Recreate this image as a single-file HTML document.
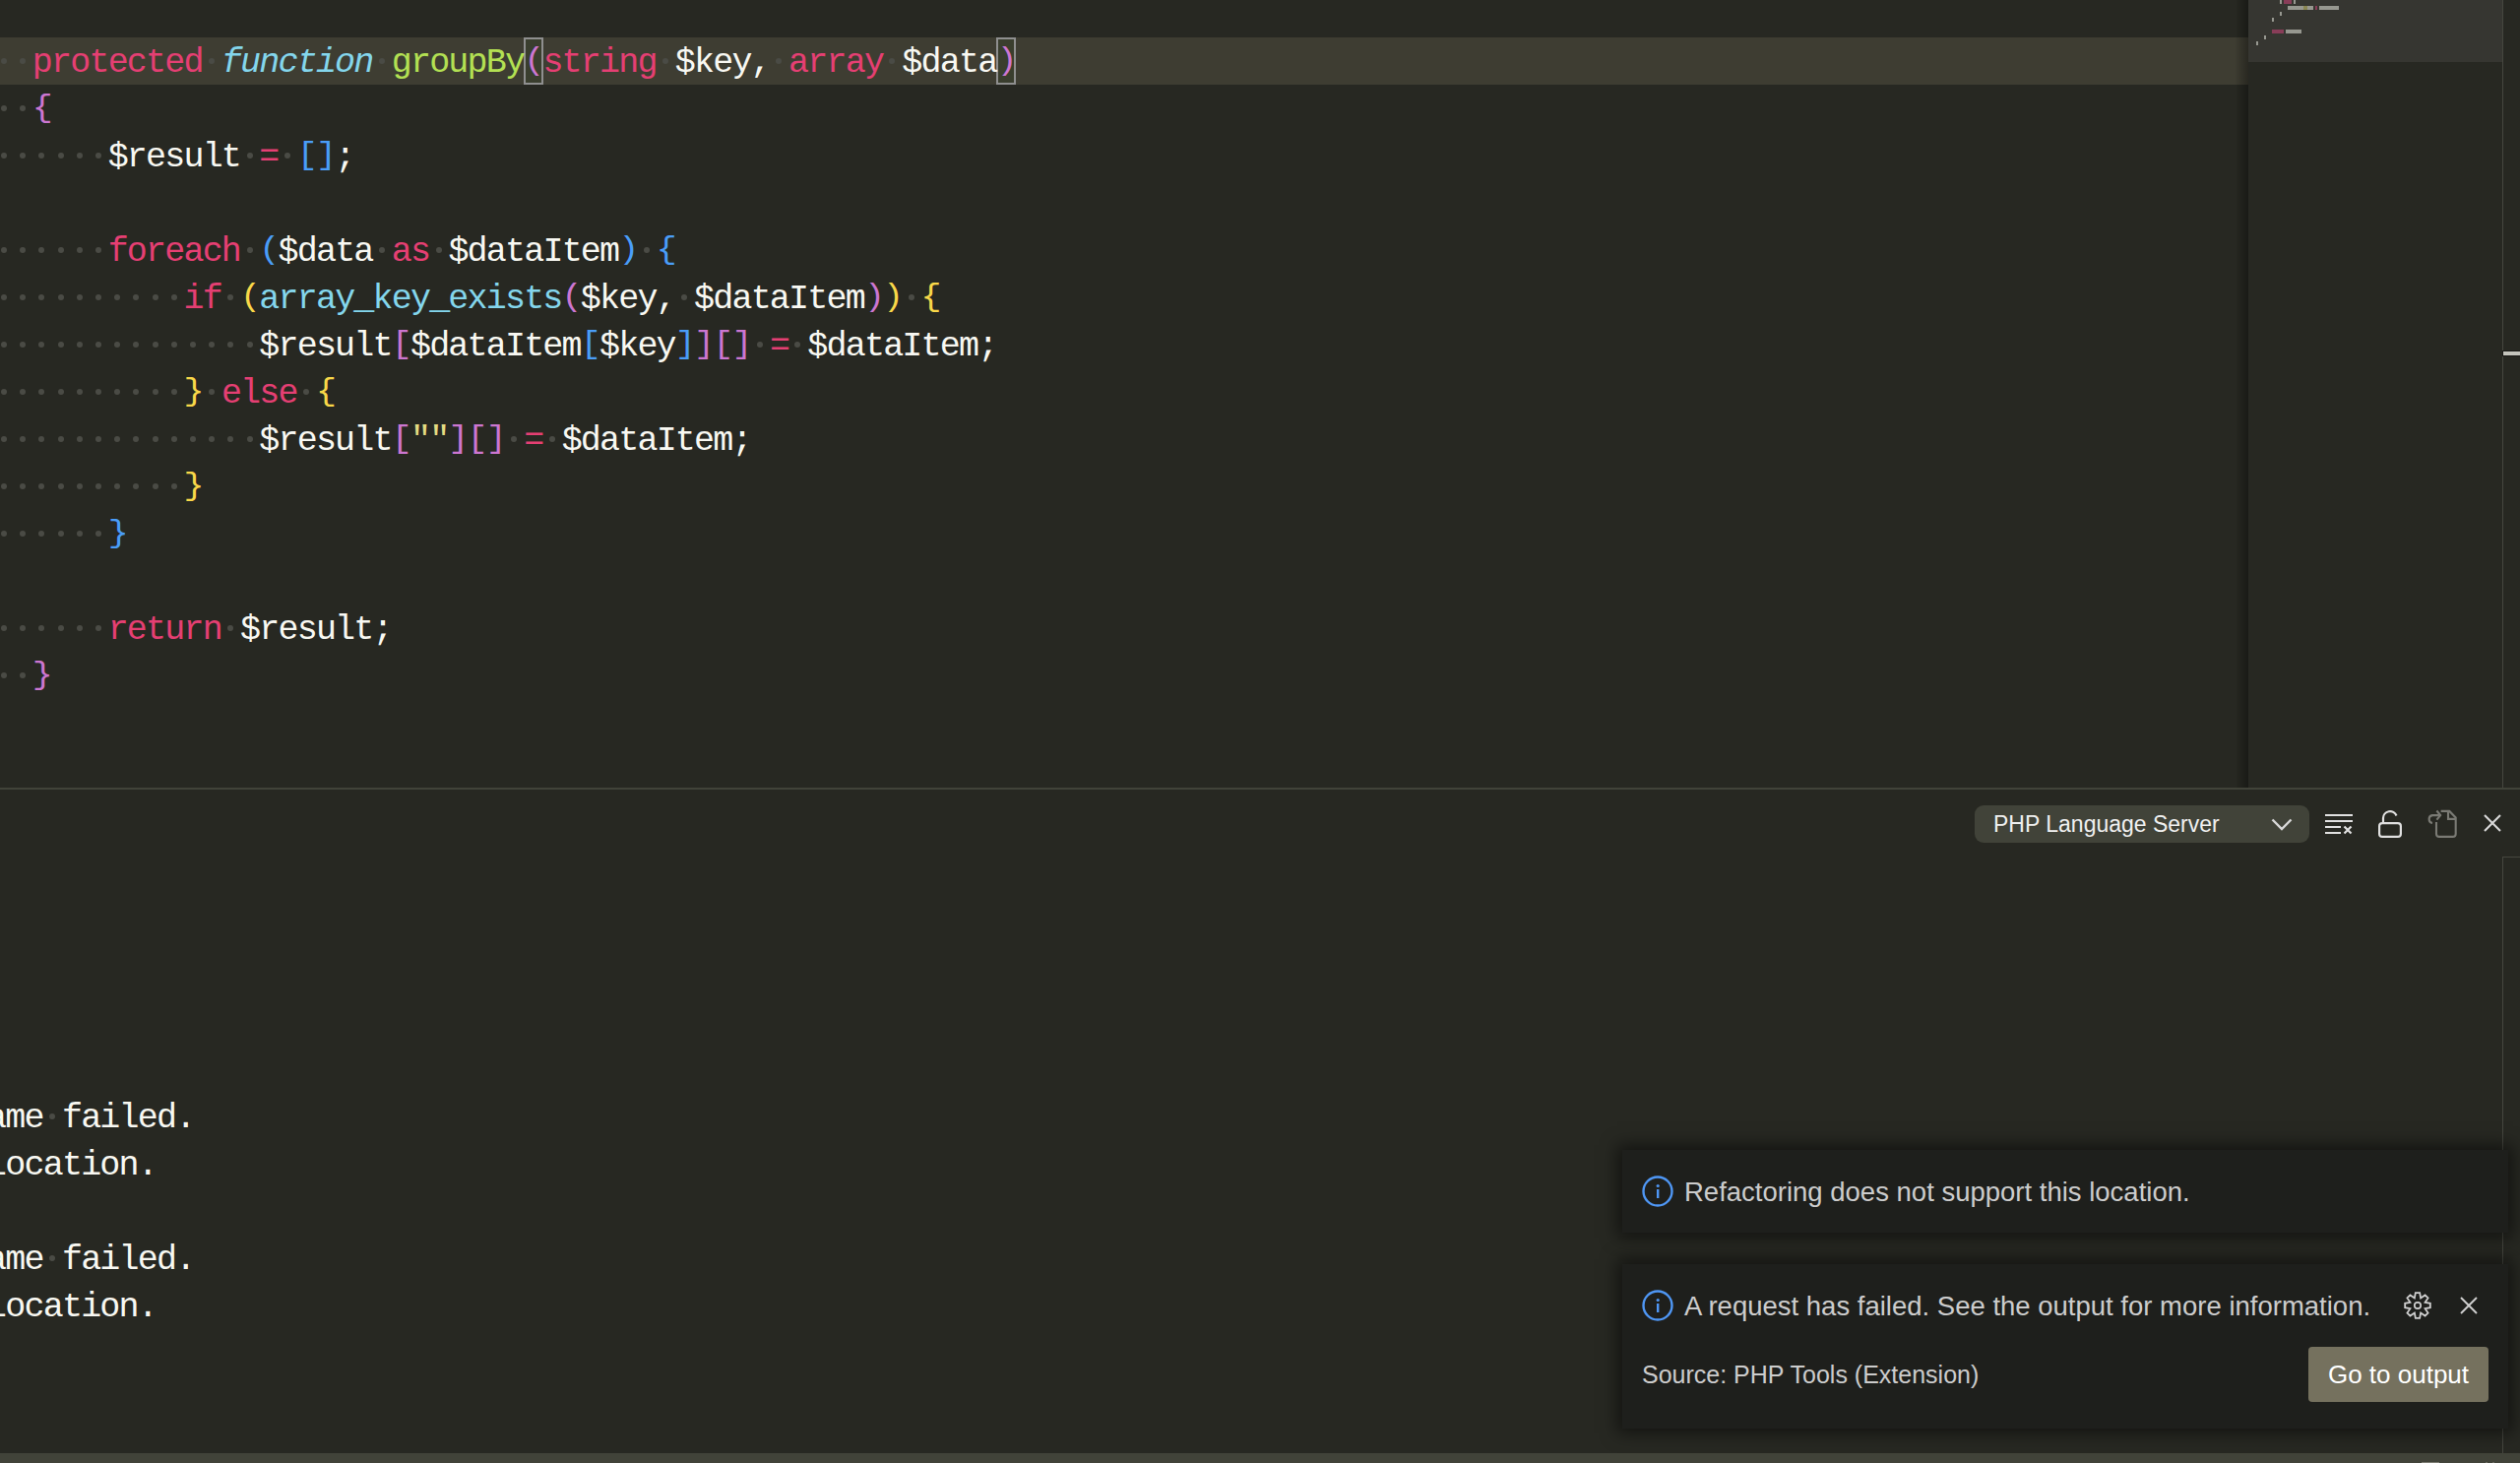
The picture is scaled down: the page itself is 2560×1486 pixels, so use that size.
<!DOCTYPE html>
<html><head><meta charset="utf-8">
<style>
html,body{margin:0;padding:0;width:2560px;height:1486px;overflow:hidden;background:#272822;}
body{position:relative;font-family:"Liberation Sans",sans-serif;}
.abs{position:absolute;}
#editor{position:absolute;left:0;top:0;width:2560px;height:800px;background:#272822;overflow:hidden;}
#curline{position:absolute;left:0;top:38px;width:2284px;height:48px;background:#3e3d32;}
.ln{position:absolute;left:-44px;height:48px;line-height:52px;white-space:pre;font-family:"Liberation Mono",monospace;font-size:35px;letter-spacing:-1.8px;color:#f8f8f2;}
.ln span{}
.br{display:inline-block;transform:scaleY(0.9);transform-origin:50% 9.9px;}
.k{color:#e53f73;}
.f{color:#84d6ec;font-style:italic;}
.g{color:#b3e053;}
.t{color:#f8f8f2;}
.s{color:#e4db82;}
.y{color:#f9d849;}
.o{color:#cc76d1;}
.b{color:#4a9df8;}
.c{color:#84d6ec;}
.d{position:absolute;width:6px;height:6px;border-radius:50%;background:#4a4b45;}
.bbox{position:absolute;top:38px;width:16px;height:44px;border:2px solid #8f8f8f;background:#3a3e2e;}
#minimap{position:absolute;left:2284px;top:0;width:258px;height:800px;}
#mmslider{position:absolute;left:2284px;top:0;width:258px;height:63px;background:#363631;}
#mmshadow{position:absolute;left:2270px;top:0;width:14px;height:800px;background:linear-gradient(to right,rgba(0,0,0,0),rgba(0,0,0,0.35));}
.mb{position:absolute;height:4px;}
#vline{position:absolute;left:2542px;top:0;width:1px;height:800px;background:#45463f;}
#ruler-cursor{position:absolute;left:2543px;top:357px;width:17px;height:4px;background:#c4c4bc;box-shadow:0 0 0 1px #1a1a17;}
#panel{position:absolute;left:0;top:800px;width:2560px;height:676px;background:#272822;border-top:2px solid #414339;box-sizing:border-box;overflow:hidden;}
#status{position:absolute;left:0;top:1476px;width:2560px;height:10px;background:#414339;}
#dropdown{position:absolute;left:2006px;top:818px;width:340px;height:38px;border-radius:9px;background:#414339;color:#f0f0f0;font-size:23px;line-height:38px;}
#dropdown .lbl{position:absolute;left:19px;top:0;}
.ico{position:absolute;}
.note{position:absolute;left:1648px;width:900px;background:#1e1f1c;box-shadow:0 0 16px 5px rgba(0,0,0,0.5);color:#cccccc;font-size:27.5px;}
.note .msg{position:absolute;left:63px;white-space:nowrap;}
#btn{position:absolute;left:2345px;top:1368px;width:183px;height:56px;background:#75715e;border-radius:4px;color:#ffffff;font-size:26px;line-height:56px;text-align:center;}
</style></head><body>
<div id="editor">
  <div id="curline"></div>
  <div class="bbox" style="left:532px"></div>
  <div class="bbox" style="left:1012px"></div>
  <i class="d" style="left:1.0px;top:59.0px"></i><i class="d" style="left:20.2px;top:59.0px"></i><i class="d" style="left:212.2px;top:59.0px"></i><i class="d" style="left:385.0px;top:59.0px"></i><i class="d" style="left:673.0px;top:59.0px"></i><i class="d" style="left:788.2px;top:59.0px"></i><i class="d" style="left:903.4px;top:59.0px"></i><i class="d" style="left:1.0px;top:107.0px"></i><i class="d" style="left:20.2px;top:107.0px"></i><i class="d" style="left:1.0px;top:155.0px"></i><i class="d" style="left:20.2px;top:155.0px"></i><i class="d" style="left:39.4px;top:155.0px"></i><i class="d" style="left:58.6px;top:155.0px"></i><i class="d" style="left:77.8px;top:155.0px"></i><i class="d" style="left:97.0px;top:155.0px"></i><i class="d" style="left:250.6px;top:155.0px"></i><i class="d" style="left:289.0px;top:155.0px"></i><i class="d" style="left:1.0px;top:251.0px"></i><i class="d" style="left:20.2px;top:251.0px"></i><i class="d" style="left:39.4px;top:251.0px"></i><i class="d" style="left:58.6px;top:251.0px"></i><i class="d" style="left:77.8px;top:251.0px"></i><i class="d" style="left:97.0px;top:251.0px"></i><i class="d" style="left:250.6px;top:251.0px"></i><i class="d" style="left:385.0px;top:251.0px"></i><i class="d" style="left:442.6px;top:251.0px"></i><i class="d" style="left:653.8px;top:251.0px"></i><i class="d" style="left:1.0px;top:299.0px"></i><i class="d" style="left:20.2px;top:299.0px"></i><i class="d" style="left:39.4px;top:299.0px"></i><i class="d" style="left:58.6px;top:299.0px"></i><i class="d" style="left:77.8px;top:299.0px"></i><i class="d" style="left:97.0px;top:299.0px"></i><i class="d" style="left:116.2px;top:299.0px"></i><i class="d" style="left:135.4px;top:299.0px"></i><i class="d" style="left:154.6px;top:299.0px"></i><i class="d" style="left:173.8px;top:299.0px"></i><i class="d" style="left:231.4px;top:299.0px"></i><i class="d" style="left:692.2px;top:299.0px"></i><i class="d" style="left:922.6px;top:299.0px"></i><i class="d" style="left:1.0px;top:347.0px"></i><i class="d" style="left:20.2px;top:347.0px"></i><i class="d" style="left:39.4px;top:347.0px"></i><i class="d" style="left:58.6px;top:347.0px"></i><i class="d" style="left:77.8px;top:347.0px"></i><i class="d" style="left:97.0px;top:347.0px"></i><i class="d" style="left:116.2px;top:347.0px"></i><i class="d" style="left:135.4px;top:347.0px"></i><i class="d" style="left:154.6px;top:347.0px"></i><i class="d" style="left:173.8px;top:347.0px"></i><i class="d" style="left:193.0px;top:347.0px"></i><i class="d" style="left:212.2px;top:347.0px"></i><i class="d" style="left:231.4px;top:347.0px"></i><i class="d" style="left:250.6px;top:347.0px"></i><i class="d" style="left:769.0px;top:347.0px"></i><i class="d" style="left:807.4px;top:347.0px"></i><i class="d" style="left:1.0px;top:395.0px"></i><i class="d" style="left:20.2px;top:395.0px"></i><i class="d" style="left:39.4px;top:395.0px"></i><i class="d" style="left:58.6px;top:395.0px"></i><i class="d" style="left:77.8px;top:395.0px"></i><i class="d" style="left:97.0px;top:395.0px"></i><i class="d" style="left:116.2px;top:395.0px"></i><i class="d" style="left:135.4px;top:395.0px"></i><i class="d" style="left:154.6px;top:395.0px"></i><i class="d" style="left:173.8px;top:395.0px"></i><i class="d" style="left:212.2px;top:395.0px"></i><i class="d" style="left:308.2px;top:395.0px"></i><i class="d" style="left:1.0px;top:443.0px"></i><i class="d" style="left:20.2px;top:443.0px"></i><i class="d" style="left:39.4px;top:443.0px"></i><i class="d" style="left:58.6px;top:443.0px"></i><i class="d" style="left:77.8px;top:443.0px"></i><i class="d" style="left:97.0px;top:443.0px"></i><i class="d" style="left:116.2px;top:443.0px"></i><i class="d" style="left:135.4px;top:443.0px"></i><i class="d" style="left:154.6px;top:443.0px"></i><i class="d" style="left:173.8px;top:443.0px"></i><i class="d" style="left:193.0px;top:443.0px"></i><i class="d" style="left:212.2px;top:443.0px"></i><i class="d" style="left:231.4px;top:443.0px"></i><i class="d" style="left:250.6px;top:443.0px"></i><i class="d" style="left:519.4px;top:443.0px"></i><i class="d" style="left:557.8px;top:443.0px"></i><i class="d" style="left:1.0px;top:491.0px"></i><i class="d" style="left:20.2px;top:491.0px"></i><i class="d" style="left:39.4px;top:491.0px"></i><i class="d" style="left:58.6px;top:491.0px"></i><i class="d" style="left:77.8px;top:491.0px"></i><i class="d" style="left:97.0px;top:491.0px"></i><i class="d" style="left:116.2px;top:491.0px"></i><i class="d" style="left:135.4px;top:491.0px"></i><i class="d" style="left:154.6px;top:491.0px"></i><i class="d" style="left:173.8px;top:491.0px"></i><i class="d" style="left:1.0px;top:539.0px"></i><i class="d" style="left:20.2px;top:539.0px"></i><i class="d" style="left:39.4px;top:539.0px"></i><i class="d" style="left:58.6px;top:539.0px"></i><i class="d" style="left:77.8px;top:539.0px"></i><i class="d" style="left:97.0px;top:539.0px"></i><i class="d" style="left:1.0px;top:635.0px"></i><i class="d" style="left:20.2px;top:635.0px"></i><i class="d" style="left:39.4px;top:635.0px"></i><i class="d" style="left:58.6px;top:635.0px"></i><i class="d" style="left:77.8px;top:635.0px"></i><i class="d" style="left:97.0px;top:635.0px"></i><i class="d" style="left:231.4px;top:635.0px"></i><i class="d" style="left:1.0px;top:683.0px"></i><i class="d" style="left:20.2px;top:683.0px"></i>
  <div class="ln" style="top:38px">    <span class="k">protected</span> <span class="f">function</span> <span class="g">groupBy</span><span class="o br">(</span><span class="k">string</span> <span class="t">$key,</span> <span class="k">array</span> <span class="t">$data</span><span class="o br">)</span></div>
<div class="ln" style="top:86px">    <span class="o br">{</span></div>
<div class="ln" style="top:134px">        <span class="t">$result</span> <span class="k">=</span> <span class="b br">[]</span><span class="t">;</span></div>
<div class="ln" style="top:182px"></div>
<div class="ln" style="top:230px">        <span class="k">foreach</span> <span class="b br">(</span><span class="t">$data</span> <span class="k">as</span> <span class="t">$dataItem</span><span class="b br">)</span> <span class="b br">{</span></div>
<div class="ln" style="top:278px">            <span class="k">if</span> <span class="y br">(</span><span class="c">array_key_exists</span><span class="o br">(</span><span class="t">$key,</span> <span class="t">$dataItem</span><span class="o br">)</span><span class="y br">)</span> <span class="y br">{</span></div>
<div class="ln" style="top:326px">                <span class="t">$result</span><span class="o br">[</span><span class="t">$dataItem</span><span class="b br">[</span><span class="t">$key</span><span class="b br">]</span><span class="o br">]</span><span class="o br">[]</span> <span class="k">=</span> <span class="t">$dataItem;</span></div>
<div class="ln" style="top:374px">            <span class="y br">}</span> <span class="k">else</span> <span class="y br">{</span></div>
<div class="ln" style="top:422px">                <span class="t">$result</span><span class="o br">[</span><span class="s">""</span><span class="o br">]</span><span class="o br">[]</span> <span class="k">=</span> <span class="t">$dataItem;</span></div>
<div class="ln" style="top:470px">            <span class="y br">}</span></div>
<div class="ln" style="top:518px">        <span class="b br">}</span></div>
<div class="ln" style="top:566px"></div>
<div class="ln" style="top:614px">        <span class="k">return</span> <span class="t">$result;</span></div>
<div class="ln" style="top:662px">    <span class="o br">}</span></div>
  <div id="mmslider"></div>
  <i class="mb" style="left:2316px;top:0px;width:2px;background:#979890"></i><i class="mb" style="left:2320px;top:0px;width:8px;background:#883d58"></i><i class="mb" style="left:2330px;top:0px;width:2px;background:#979890"></i><i class="mb" style="left:2324px;top:6px;width:16px;background:#979890"></i><i class="mb" style="left:2340px;top:6px;width:4px;background:#8a8652"></i><i class="mb" style="left:2344px;top:6px;width:6px;background:#979890"></i><i class="mb" style="left:2352px;top:6px;width:2px;background:#883d58"></i><i class="mb" style="left:2356px;top:6px;width:20px;background:#979890"></i><i class="mb" style="left:2316px;top:12px;width:2px;background:#979890"></i><i class="mb" style="left:2308px;top:18px;width:2px;background:#979890"></i><i class="mb" style="left:2308px;top:30px;width:12px;background:#883d58"></i><i class="mb" style="left:2322px;top:30px;width:16px;background:#979890"></i><i class="mb" style="left:2300px;top:36px;width:2px;background:#979890"></i><i class="mb" style="left:2292px;top:42px;width:2px;background:#979890"></i>
  <div id="mmshadow"></div>
  <div id="vline"></div>
  <div id="ruler-cursor"></div>
</div>
<div id="panel"></div>
<div id="paneltext" style="position:absolute;left:0;top:0;">
  <i class="d" style="left:50.3px;top:1131.0px"></i><i class="d" style="left:50.3px;top:1275.0px"></i>
  <div class="ln out" style="top:1110px;left:-13.9px">ame failed.</div>
<div class="ln out" style="top:1158px;left:-13.9px">location.</div>
<div class="ln out" style="top:1254px;left:-13.9px">ame failed.</div>
<div class="ln out" style="top:1302px;left:-13.9px">location.</div>
</div>
<div class="abs" style="left:2542px;top:870px;width:1px;height:606px;background:#45463f;"></div>
<div class="abs" style="left:2542px;top:870px;width:18px;height:1px;background:#45463f;"></div>
<div id="dropdown"><span class="lbl">PHP Language Server</span>
  <svg class="ico" style="left:301px;top:13px" width="22" height="13" viewBox="0 0 22 13"><path d="M1.5 1.5 L11 11 L20.5 1.5" fill="none" stroke="#d8d8d8" stroke-width="2.4"/></svg>
</div>
<!-- clear output -->
<svg class="ico" style="left:2360px;top:824px" width="34" height="26" viewBox="0 0 34 26">
  <g stroke="#e0e0e0" stroke-width="2.2" fill="none">
    <path d="M2 4H30M2 10H30M2 16H18M2 22H18"/>
    <path d="M21.5 15.5L28.5 22.5M28.5 15.5L21.5 22.5"/>
  </g>
</svg>
<!-- unlock -->
<svg class="ico" style="left:2413px;top:821px" width="30" height="32" viewBox="0 0 30 32">
  <g stroke="#e0e0e0" stroke-width="2.2" fill="none">
    <rect x="4.1" y="15.1" width="21.8" height="13.8" rx="3"/>
    <path d="M8 15V10.1A7 7 0 0 1 21.5 7.5"/>
  </g>
</svg>
<!-- copy/open (disabled) -->
<svg class="ico" style="left:2462px;top:821px" width="36" height="32" viewBox="0 0 36 32">
  <g stroke="#7a7a74" stroke-width="2.1" fill="none">
    <path d="M13 14V26A3 3 0 0 0 16 28.9H29.7A3 3 0 0 0 32.7 25.9V9.5L26.3 2.9H17.6"/>
    <path d="M25 2.9V10.9H32.7"/>
    <path d="M9 15A4 4 0 0 1 9 7.1H17.2"/>
    <path d="M13.4 2.5L17.2 7.1L13.4 11.7"/>
  </g>
</svg>
<!-- close -->
<svg class="ico" style="left:2521px;top:826px" width="22" height="22" viewBox="0 0 22 22">
  <path d="M3 2L19 18M19 2L3 18" stroke="#d8d8d8" stroke-width="2.1" fill="none"/>
</svg>

<div class="note" style="top:1168px;height:84px;">
  <svg class="ico" style="left:20px;top:26px" width="32" height="32" viewBox="0 0 32 32">
    <circle cx="16" cy="16" r="14.5" stroke="#4f97f5" stroke-width="2.4" fill="none"/>
    <circle cx="16.2" cy="10.5" r="1.6" fill="#4f97f5"/>
    <rect x="15" y="14" width="2.4" height="9" fill="#4f97f5"/>
  </svg>
  <span class="msg" style="top:27px;">Refactoring does not support this location.</span>
</div>
<div class="note" style="top:1284px;height:167px;">
  <svg class="ico" style="left:20px;top:26px" width="32" height="32" viewBox="0 0 32 32">
    <circle cx="16" cy="16" r="14.5" stroke="#4f97f5" stroke-width="2.4" fill="none"/>
    <circle cx="16.2" cy="10.5" r="1.6" fill="#4f97f5"/>
    <rect x="15" y="14" width="2.4" height="9" fill="#4f97f5"/>
  </svg>
  <span class="msg" style="top:27px;">A request has failed. See the output for more information.</span>
  <svg class="ico" style="left:792px;top:26px" width="32" height="32" viewBox="0 0 32 32">
    <g fill="none" stroke="#d0d0d0" stroke-width="1.8" stroke-linejoin="miter">
      <path d="M12.86 8.42 L13.85 3.18 L18.15 3.18 L19.14 8.42 L23.55 5.42 L26.58 8.45 L23.58 12.86 L28.82 13.85 L28.82 18.15 L23.58 19.14 L26.58 23.55 L23.55 26.58 L19.14 23.58 L18.15 28.82 L13.85 28.82 L12.86 23.58 L8.45 26.58 L5.42 23.55 L8.42 19.14 L3.18 18.15 L3.18 13.85 L8.42 12.86 L5.42 8.45 L8.45 5.42Z"/>
      <circle cx="16" cy="16" r="3.2" stroke-width="1.7"/>
    </g>
  </svg>
  <svg class="ico" style="left:849px;top:31px" width="22" height="22" viewBox="0 0 22 22">
    <path d="M3 3L19 19M19 3L3 19" stroke="#d0d0d0" stroke-width="1.9" fill="none"/>
  </svg>
</div>
<div class="abs" style="left:1668px;top:1382px;color:#cccccc;font-size:25px;white-space:nowrap;">Source: PHP Tools (Extension)</div>
<div id="btn">Go to output</div>
<div id="status"></div>
<div class="abs" style="left:2460px;top:1485px;width:18px;height:1px;background:#7c7c72;"></div>
<div class="abs" style="left:2525px;top:1485px;width:2px;height:1px;background:#6a6a60;"></div>
<div class="abs" style="left:2532px;top:1485px;width:2px;height:1px;background:#6a6a60;"></div>
</body></html>
